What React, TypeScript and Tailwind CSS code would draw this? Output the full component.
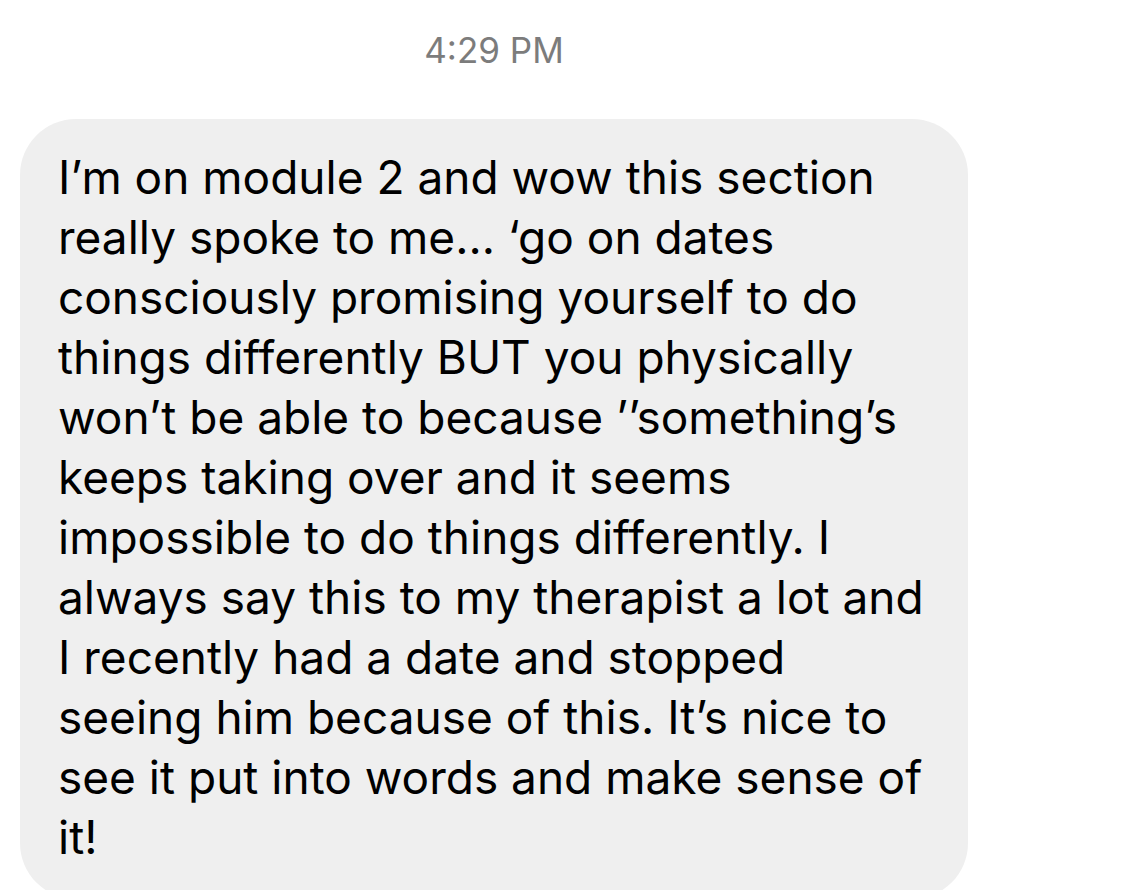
import React from 'react';

const lines = [
  'I\u2019m on module 2 and wow this section',
  'really spoke to me\u2026 \u2018go on dates',
  'consciously promising yourself to do',
  'things differently BUT you physically',
  'won\u2019t be able to because \u2019\u2019something\u2019s',
  'keeps taking over and it seems',
  'impossible to do things differently. I',
  'always say this to my therapist a lot and',
  'I recently had a date and stopped',
  'seeing him because of this. It\u2019s nice to',
  'see it put into words and make sense of',
  'it!',
];

const App = () => {
  return (
    <div
      className="w-[1135px] h-[890px] overflow-hidden bg-white"
      style={{ fontFamily: 'Inter, "Noto Sans", sans-serif' }}
    >
      <div className="w-[988px] pt-[30px] text-center text-[35px] leading-[40px] text-[#7c7c7c]">
        4:29 PM
      </div>
      <div className="ml-[20px] mt-[49px] w-[948px] rounded-[56px] bg-[#efefef] pl-[38px] pt-[28px] pb-[32px] text-[46px] leading-[60px] text-black">
        {lines.map((line, i) => (
          <div key={i} className="whitespace-nowrap">
            {line}
          </div>
        ))}
      </div>
    </div>
  );
};

export default App;
